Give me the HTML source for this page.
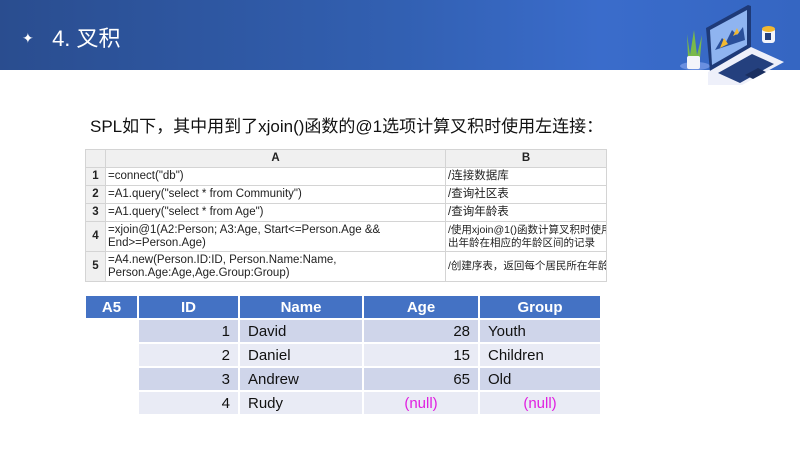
<!DOCTYPE html>
<html><head><meta charset="utf-8"><style>
*{margin:0;padding:0;box-sizing:border-box}
body{width:800px;height:450px;background:#fff;position:relative;overflow:hidden;font-family:"Liberation Sans","Noto Sans CJK SC",sans-serif}
.hdr{position:absolute;left:0;top:0;width:800px;height:70px;background:linear-gradient(90deg,#2a4d8f 0%,#3260b2 50%,#3a6ccb 75%,#3566c2 100%)}
.title{position:absolute;left:22px;top:21px;color:#fff;font-size:22px}
.title .s{font-size:14px;position:relative;top:-3px}
.sub{position:absolute;left:90px;top:112px;font-size:17px;color:#111}
table{border-collapse:collapse;position:absolute}
.g{left:85px;top:149px;font-size:11.5px;color:#222;table-layout:fixed;width:521px}
.g td{border:1px solid #d4d4d4;padding:0 2px;line-height:13px;vertical-align:middle;white-space:nowrap;overflow:hidden}
.g tr.h td{background:#f0f0f0;font-weight:bold;text-align:center;height:18px}
.g td.n{background:#f0f0f0;font-weight:bold;text-align:center}
.r{left:84px;top:294px;font-size:15px;color:#111}
.r td{border:2px solid #fff;height:24px;padding:0 8px}
.r tr.h td{background:#4472c4;color:#fff;font-weight:bold;text-align:center;height:24px}
.r tr.a td.c{background:#cfd5ea}
.r tr.b td.c{background:#e9ebf5}
.r td.e{background:#fff}
.rt{text-align:right}.ct{text-align:center}
.nul{color:#e020e0}
</style></head><body>
<div class="hdr"></div>
<div class="title"><span class="s">✦</span>&nbsp;&nbsp;&nbsp;4. 叉积</div>
<svg style="position:absolute;left:650px;top:0" width="150" height="85" viewBox="0 0 150 85">
<ellipse cx="45" cy="66" rx="15" ry="4" fill="#6a8fe0"/>
<path d="M37 34 L40 55 L44 30 L47 55 L52 35 L50 58 L38 58Z" fill="#79b94a"/>
<rect x="37" y="56" width="13" height="13" rx="2" fill="#f3f4fa"/>
<path d="M56 28 L98 5 L101 6 L101 48 L60 72Z" fill="#1e3a78"/>
<path d="M60 30 L97 10 L97 45 L62 65Z" fill="#8fb4f0"/>
<path d="M65 50 L72 38 L76 42 L82 30 L87 35 L93 27 L95 40Z" fill="#2a4f9a"/>
<path d="M70 48 L74 38 L78 44Z M83 36 L87 28 L89 33Z" fill="#f2b830"/>
<path d="M58 72 L101 47 L134 62 L92 85 L58 85Z" fill="#eef0fa"/>
<path d="M68 73 L102 54 L124 64 L90 83Z" fill="#24407e"/>
<path d="M95 75 L108 68 L116 72 L103 79Z" fill="#1a2f60"/>
<rect x="112" y="28" width="13" height="15" rx="3" fill="#f3f4fa"/>
<ellipse cx="118.5" cy="29" rx="6.5" ry="3" fill="#f2b830"/>
<rect x="115" y="33" width="6" height="7" fill="#24407e"/>
</svg>
<div class="sub">SPL如下，其中用到了xjoin()函数的@1选项计算叉积时使用左连接：</div>
<table class="g">
<colgroup><col style="width:20px"><col style="width:340px"><col style="width:161px"></colgroup>
<tr class="h"><td></td><td>A</td><td>B</td></tr>
<tr style="height:18px"><td class="n">1</td><td>=connect("db")</td><td>/连接数据库</td></tr>
<tr style="height:18px"><td class="n">2</td><td>=A1.query("select * from Community")</td><td>/查询社区表</td></tr>
<tr style="height:18px"><td class="n">3</td><td>=A1.query("select * from Age")</td><td>/查询年龄表</td></tr>
<tr style="height:30px"><td class="n">4</td><td>=xjoin@1(A2:Person; A3:Age, Start&lt;=Person.Age &amp;&amp;<br>End&gt;=Person.Age)</td><td style="font-size:10.5px">/使用xjoin@1()函数计算叉积时使用左连接，同时选<br>出年龄在相应的年龄区间的记录</td></tr>
<tr style="height:30px"><td class="n">5</td><td>=A4.new(Person.ID:ID, Person.Name:Name,<br>Person.Age:Age,Age.Group:Group)</td><td style="font-size:10.5px">/创建序表，返回每个居民所在年龄段</td></tr>
</table>
<table class="r">
<tr class="h"><td style="width:53px">A5</td><td style="width:101px">ID</td><td style="width:124px">Name</td><td style="width:116px">Age</td><td style="width:122px">Group</td></tr>
<tr class="a"><td class="e"></td><td class="c rt">1</td><td class="c">David</td><td class="c rt">28</td><td class="c">Youth</td></tr>
<tr class="b"><td class="e"></td><td class="c rt">2</td><td class="c">Daniel</td><td class="c rt">15</td><td class="c">Children</td></tr>
<tr class="a"><td class="e"></td><td class="c rt">3</td><td class="c">Andrew</td><td class="c rt">65</td><td class="c">Old</td></tr>
<tr class="b"><td class="e"></td><td class="c rt">4</td><td class="c">Rudy</td><td class="c ct nul">(null)</td><td class="c ct nul">(null)</td></tr>
</table>
</body></html>
